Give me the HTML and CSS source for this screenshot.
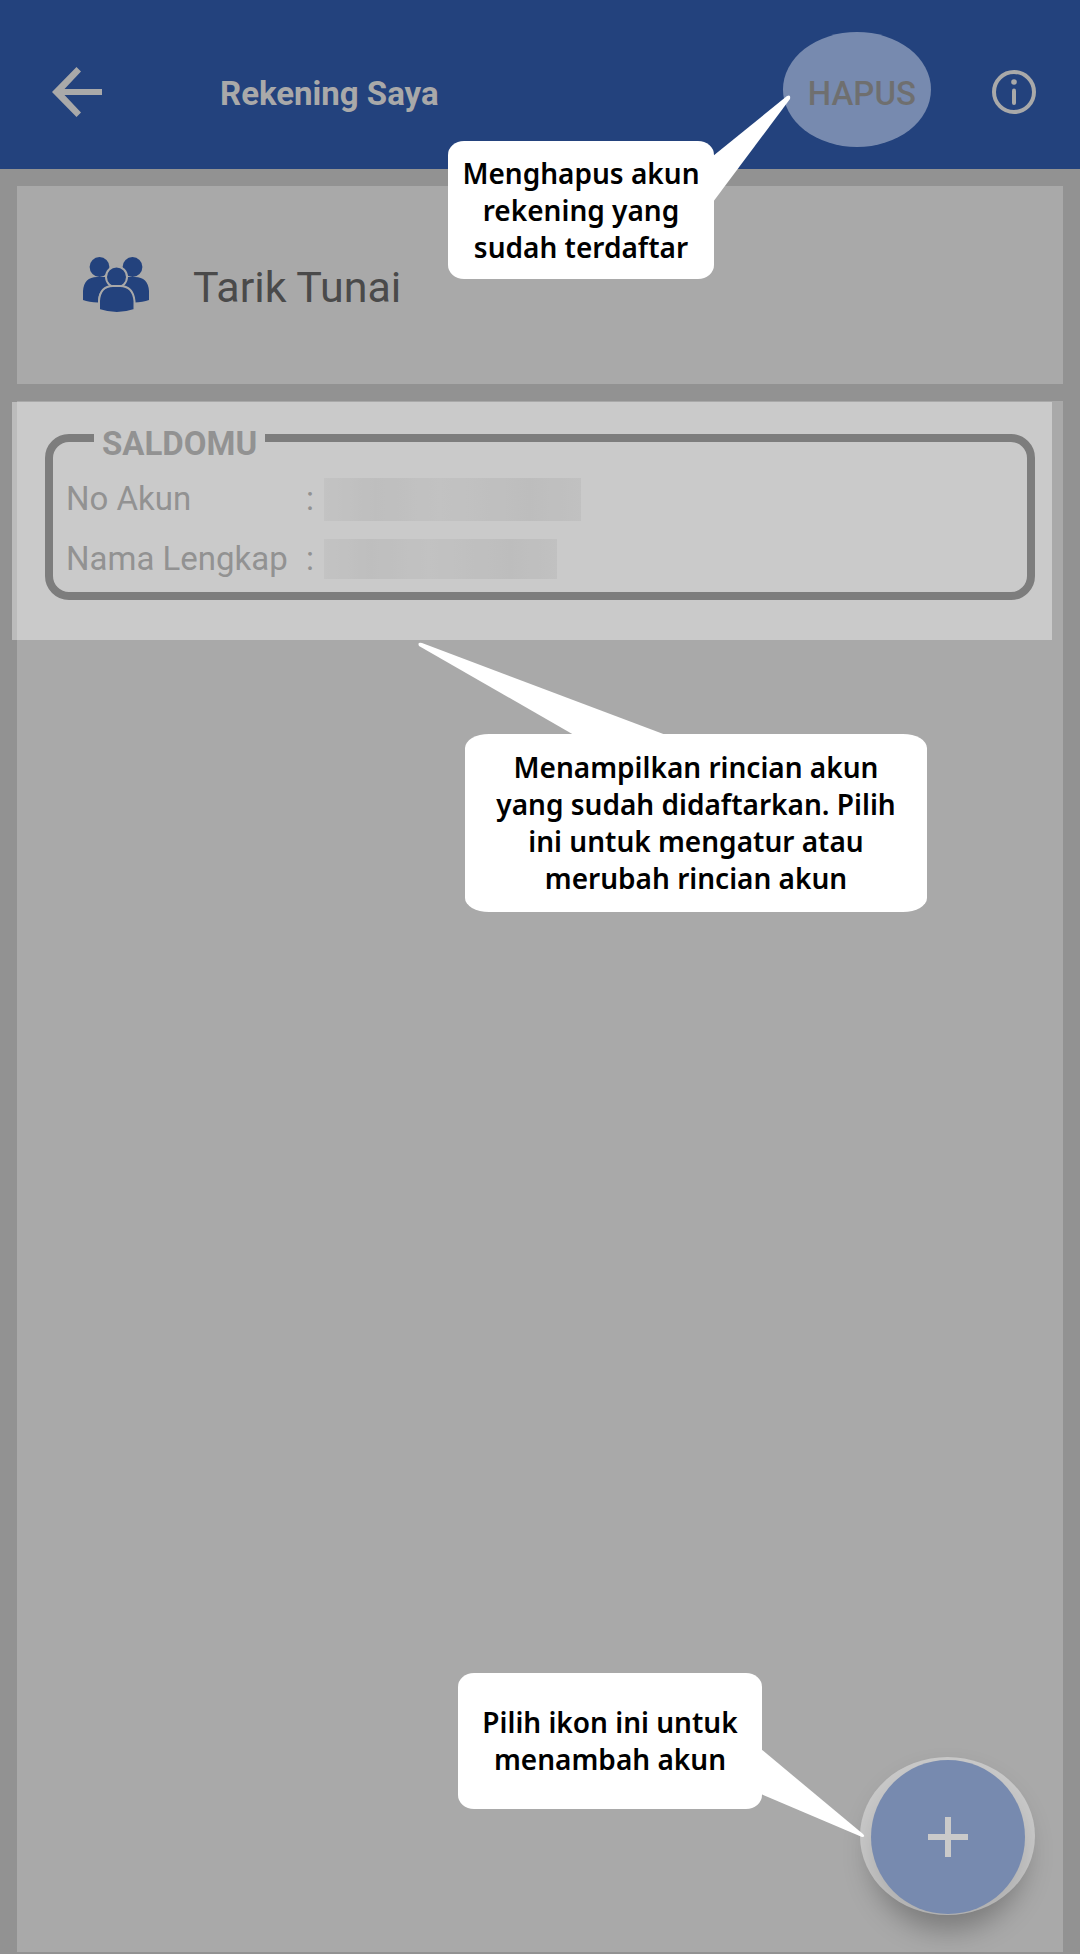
FILE: index.html
```html
<!DOCTYPE html>
<html lang="id">
<head>
<meta charset="utf-8">
<meta name="viewport" content="width=device-width, initial-scale=1">
<title>Rekening Saya</title>
<link rel="stylesheet" href="styles.css">
</head>
<body>
<header class="topbar">
  <button class="icon-button" type="button" aria-label="Kembali">
    <svg class="back-icon" viewBox="0 0 50 50" aria-hidden="true"><path d="M50 22H12.500L29 4.500 24.500 0 0 25 24.500 50 29 45.500 12.500 28H50z"/></svg>
  </button>
  <h1 class="title">Rekening Saya</h1>
  <div class="delete">
    <button class="delete-button" type="button">HAPUS</button>
    <span class="spotlight spotlight-delete"></span>
    <div class="callout callout-delete">
      <svg class="tail tail-delete" viewBox="0 0 78 108" aria-hidden="true"><path d="M0 61 74 1Q78-1 77 4L0 107z"/></svg>
      <p class="callout-text">Menghapus akun<br>rekening yang<br>sudah terdaftar</p>
    </div>
  </div>
  <button class="icon-button" type="button" aria-label="Info">
    <svg class="info-icon" viewBox="0 0 44 44" aria-hidden="true"><circle cx="22" cy="22" r="20" fill="none" stroke="currentColor" stroke-width="4"/><circle cx="22" cy="12" r="2.800"/><path d="M22 20.500v12.500" stroke="currentColor" stroke-width="4" stroke-linecap="round"/></svg>
  </button>
</header>
<main class="content">
  <section class="card service">
    <svg class="people-icon" viewBox="0 0 66 56" aria-hidden="true">
      <circle cx="16.500" cy="10" r="9.900"/><circle cx="49.500" cy="10" r="9.900"/>
      <path d="M0 43V34Q1 20 14 20H23Q27 30 27 30Q15 31 15 45.500Q6 45 0 43z"/>
      <path d="M66 43V34Q65 20 52 20H43Q39 30 39 30Q51 31 51 45.500Q60 45 66 43z"/>
      <g class="front-person"><circle cx="33.500" cy="20" r="10.500"/><path d="M16 53V44Q17 29 30 29H37Q50 29 51.500 44V53Q34 59 16 53z"/></g>
    </svg>
    <h2 class="service-name">Tarik Tunai</h2>
  </section>
  <section class="card accounts">
    <fieldset class="account">
      <legend class="account-type">SALDOMU</legend>
      <dl class="details">
        <dt>No Akun</dt><dd>: <span class="masked masked-number"></span></dd>
        <dt>Nama Lengkap</dt><dd>: <span class="masked masked-name"></span></dd>
      </dl>
    </fieldset>
    <span class="spotlight spotlight-account"></span>
    <div class="callout callout-account">
      <svg class="tail tail-account" viewBox="0 0 247 93" aria-hidden="true"><path d="M0 4Q-2 0 3 1L247 93H155z"/></svg>
      <p class="callout-text">Menampilkan rincian akun<br>yang sudah didaftarkan. Pilih<br>ini untuk mengatur atau<br>merubah rincian akun</p>
    </div>
    <div class="add">
      <button class="add-button" type="button" aria-label="Tambah akun">
        <svg class="plus-icon" viewBox="0 0 40 40" aria-hidden="true"><path d="M17 0h6v17h17v6H23v17h-6V23H0v-6h17z"/></svg>
      </button>
      <span class="spotlight spotlight-add"></span>
      <div class="callout callout-add">
        <svg class="tail tail-add" viewBox="0 0 104 90" aria-hidden="true"><path d="M0 0 102 85Q105 88 101 88L0 45z"/></svg>
        <p class="callout-text">Pilih ikon ini untuk<br>menambah akun</p>
      </div>
    </div>
  </section>
</main>
</body>
</html>
```
FILE: styles.css
```css
:root {
  --blue: #23427d;
  --surface: #a9a9a9;
  --backdrop: #929292;
  --ink: #4a4a4a;
}

* { box-sizing: border-box; }

body {
  display: flex;
  flex-direction: column;
  min-height: 100vh;
  margin: 0;
  background: var(--backdrop);
  color: var(--ink);
  font: 33px/38px Roboto, sans-serif;
}

h1, h2, p, dl, dd { margin: 0; }

button {
  padding: 0;
  border: 0;
  background: none;
  color: inherit;
  font: inherit;
}

svg { display: block; fill: currentColor; }

.topbar {
  display: flex;
  align-items: center;
  padding: 50px 44px 35px 52px;
  background: var(--blue);
  color: var(--surface);
}

.icon-button { height: 84px; }
.back-icon { width: 50px; height: 50px; }
.info-icon { width: 44px; height: 44px; }

.title {
  flex: 1;
  margin-left: 118px;
  padding-top: 4px;
  font-size: 33px;
  font-weight: 700;
}

.delete { position: relative; margin-right: 76px; padding-top: 4px; }
.delete-button { display: block; color: #161616; font-weight: 500; }

.spotlight {
  position: absolute;
  background: rgba(255, 255, 255, 0.385);
  pointer-events: none;
}
.spotlight-delete { top: -39px; left: -25px; width: 148px; height: 115px; border-radius: 50%; }
.spotlight-account { top: 1px; left: -5px; right: 11px; height: 238px; }
.spotlight-add { top: -3px; left: -11px; width: 175px; height: 158px; border-radius: 50%; }

.content {
  display: flex;
  flex: 1;
  flex-direction: column;
  gap: 17px;
  padding: 17px 17px 2px;
}

.card { background: var(--surface); }

.service {
  display: flex;
  align-items: center;
  gap: 44px;
  padding: 71px 66px;
}
.people-icon { width: 66px; height: 56px; color: var(--blue); }
.front-person { stroke: var(--surface); stroke-width: 2px; }
.service-name { padding-top: 3px; font-size: 43px; font-weight: 400; }

.accounts { position: relative; flex: 1; padding: 12px 28px; }

.account {
  margin: 0;
  padding: 6px 10px 3px 13px;
  border: 8px solid #2c2c2c;
  border-radius: 24px;
}
.account-type {
  margin-left: 28px;
  padding: 12px 8px 0;
  color: #4e4e4e;
  font-weight: 700;
}

.details {
  display: grid;
  grid-template-columns: 240px 1fr;
  color: #4e4e4e;
  line-height: 60px;
}
.details dd { display: flex; align-items: center; gap: 10px; }
.masked { background: linear-gradient(90deg, #9e9e9e, #969696 20%, #9c9c9c 45%, #959595 80%, #9a9a9a); }
.masked-number { width: 257px; height: 43px; }
.masked-name { width: 233px; height: 40px; }

.callout {
  position: absolute;
  z-index: 1;
  display: flex;
  align-items: center;
  justify-content: center;
  border-radius: 16px / 14px;
  background: #fff;
  color: #000;
}
.callout-text {
  font: 600 28px/37px "Trebuchet MS", "Noto Sans", sans-serif;
  text-align: center;
  white-space: nowrap;
}
.callout-delete { top: 70px; right: 202px; width: 266px; height: 138px; }
.callout-account { top: 333px; left: 448px; width: 462px; height: 178px; border-radius: 24px / 14px; }
.callout-add { top: -87px; right: 263px; width: 304px; height: 136px; }

.tail { position: absolute; overflow: visible; color: #fff; }
.tail-delete { top: -46px; left: 265px; width: 78px; height: 108px; }
.tail-account { top: -92px; left: -46px; width: 247px; height: 93px; }
.tail-add { top: 76px; left: 303px; width: 104px; height: 90px; }

.add { position: absolute; right: 38px; bottom: 38px; }
.add-button {
  display: grid;
  place-items: center;
  width: 154px;
  height: 154px;
  border-radius: 50%;
  background: var(--blue);
  box-shadow: 0 16px 28px rgba(0, 0, 0, 0.28);
  color: var(--surface);
}
.plus-icon { width: 40px; height: 40px; }
```
